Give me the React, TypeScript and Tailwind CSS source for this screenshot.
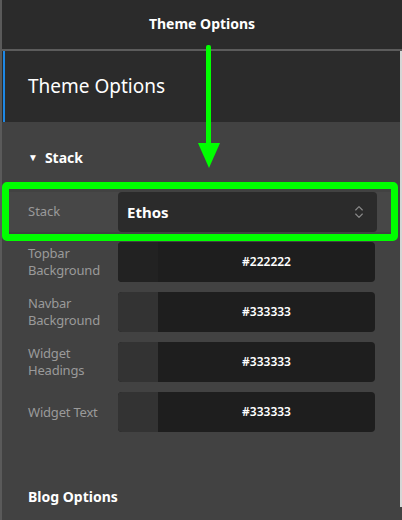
import { ChevronsUpDown } from 'lucide-react';

interface ColorField {
  label: string[];
  value: string;
  swatch: string;
}

const colorFields: ColorField[] = [
  { label: ['Topbar', 'Background'], value: '#222222', swatch: 'bg-[#222222]' },
  { label: ['Navbar', 'Background'], value: '#333333', swatch: 'bg-[#333333]' },
  { label: ['Widget', 'Headings'], value: '#333333', swatch: 'bg-[#333333]' },
  { label: ['Widget Text'], value: '#333333', swatch: 'bg-[#333333]' },
];

const App = () => {
  return (
    <div className="relative w-[402px] h-[520px] overflow-hidden bg-[#424242] font-['Noto_Sans',sans-serif] border-l-2 border-[#5a5a5a]">
      {/* Top bar */}
      <header className="h-[51px] bg-[#2b2b2b] border-b-2 border-[#5c5c5c] flex items-center justify-center">
        <h1 className="text-[14px] font-bold text-white -mt-[3px]">Theme Options</h1>
      </header>

      <div className="flex">
        <div className="flex-1">
          {/* Panel heading */}
          <div className="h-[71px] bg-[#2b2b2b] flex items-center pl-[1px]">
            <div className="w-[2px] h-full bg-[#1e88e5]" />
            <h2 className="ml-[23px] text-[19px] text-white -mt-[1px]">Theme Options</h2>
          </div>

          <main className="pt-[25px]">
            <div className="flex items-center gap-[7px] pl-[26px] text-[14px] font-bold text-white">
              <span className="text-[10px]">▼</span>
              <span>Stack</span>
            </div>

            <div className="mt-[24px] mx-[5px] h-[40px] bg-[#474747] flex items-center pl-[21px] pr-[18px]">
              <span className="w-[90px] text-[13px] text-[#9a9a9a]">Stack</span>
              <div className="flex-1 h-[40px] bg-[#2b2b2b] rounded-[4px] flex items-center justify-between pl-[9px] pr-[10px]">
                <span className="text-[15px] font-bold text-white">Ethos</span>
                <ChevronsUpDown size={16} strokeWidth={1.75} className="text-[#8a8a8a]" />
              </div>
            </div>

            <div className="mt-[10px] flex flex-col gap-[10px] pl-[26px] pr-[25px]">
              {colorFields.map((field) => (
                <div key={field.value + field.label.join('')} className="flex items-center h-[40px]">
                  <div className="w-[90px] text-[13px] leading-[17px] text-[#9a9a9a] tracking-[-0.2px]">
                    {field.label.map((line) => (
                      <div key={line}>{line}</div>
                    ))}
                  </div>
                  <div className="flex-1 h-[40px] rounded-[4px] overflow-hidden flex bg-[#1e1e1e]">
                    <div className={`w-[40px] h-full ${field.swatch}`} />
                    <div className="flex-1 flex items-center justify-center text-[12px] font-semibold text-white">
                      {field.value}
                    </div>
                  </div>
                </div>
              ))}
            </div>

            <div className="mt-[54px] pl-[26px] text-[14px] font-bold text-white">Blog Options</div>
          </main>
        </div>
        {/* scrollbar edge */}
        <div className="w-[2px] bg-[#d6d6d6]" />
      </div>

      {/* Annotation overlay */}
      <div className="absolute left-0 top-[182px] w-[396px] h-[59px] border-[7px] border-[#00ff00] rounded-[5px]" />
      <div className="absolute left-[204px] top-[45px] w-[5px] h-[100px] bg-[#00ff00] rounded-t-[2px]" />
      <svg className="absolute left-[196px] top-[143px]" width="22" height="25" viewBox="0 0 22 25">
        <polygon points="0,0 22,0 11,25" fill="#00ff00" />
      </svg>
    </div>
  );
};

export default App;
